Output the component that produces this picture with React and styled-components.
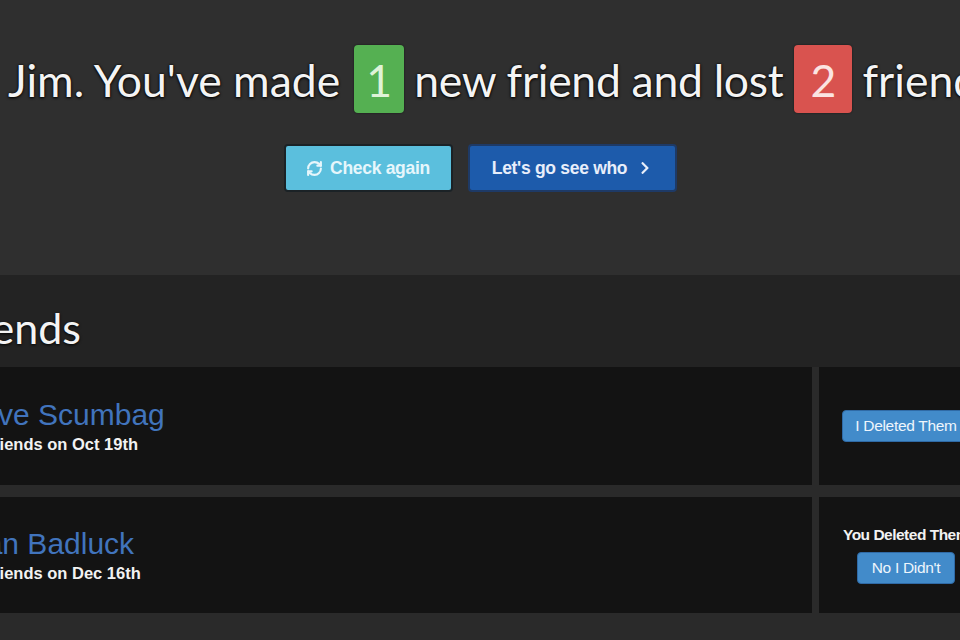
import React from "react";
import styled, { createGlobalStyle } from "styled-components";
import { RefreshCw } from "lucide-react";
import { FaChevronRight } from "react-icons/fa";

// globals

const Global = createGlobalStyle`
  html, body {
    margin: 0;
    padding: 0;
    background: #272727;
    overflow: hidden;
  }
  body {
    width: 960px;
    height: 640px;
  }
`;

// styles

const Page = styled.div`
  width: 960px;
  height: 640px;
  overflow: hidden;
  display: flex;
  flex-direction: column;
`;

const Hero = styled.div`
  height: 275px;
  flex-shrink: 0;
  background: #2f2f2f;
  display: flex;
  flex-direction: column;
  padding-top: 45px;
  box-sizing: border-box;
`;

const Headline = styled.div`
  display: flex;
  align-items: center;
  white-space: nowrap;
  padding-left: 8px;
  font-family: "Lato", "DejaVu Sans", sans-serif;
  font-size: 44.5px;
  color: #f4f4f4;
  text-shadow: 0 1px 3px #000, 0 0 2px #000;
`;

const Part = styled.span`
  letter-spacing: ${(p) => p.ls || 0}px;
`;

const Badge = styled.span`
  display: inline-flex;
  align-items: center;
  justify-content: center;
  height: 68px;
  min-width: ${(p) => p.w}px;
  margin: 0 10px 0 ${(p) => p.ml}px;
  border-radius: 4px;
  background: ${(p) => (p.kind === "good" ? "#55b052" : "#d9534f")};
  color: ${(p) => (p.kind === "good" ? "#dff3d8" : "#fbe4e2")};
  text-shadow: none;
  box-shadow: 0 0 2px rgba(0, 0, 0, 0.6);
`;

const Actions = styled.div`
  display: flex;
  justify-content: center;
  gap: 15px;
  margin-top: 31px;
`;

const Btn = styled.button`
  display: inline-flex;
  align-items: center;
  justify-content: center;
  gap: 7px;
  height: 48px;
  width: ${(p) => p.w}px;
  border-radius: 4px;
  font-family: "Liberation Sans", Arial, sans-serif;
  font-weight: 700;
  font-size: 17.5px;
  letter-spacing: -0.3px;
  color: ${(p) => (p.variant === "info" ? "#e6f6fb" : "#e8eefa")};
  background: ${(p) => (p.variant === "info" ? "#5bbfdd" : "#1d5bab")};
  border: 2px solid ${(p) => (p.variant === "info" ? "#1b2226" : "#1e3a66")};
  padding: 0;
`;

const Panel = styled.div`
  margin-left: -60px;
  width: 1053px;
  display: flex;
  flex-direction: column;
  flex: 1;
`;

const PanelHead = styled.div`
  height: 92px;
  box-sizing: border-box;
  padding-top: 12px;
  background: #232323;
  display: flex;
  align-items: center;
  padding-left: 3px;
  font-family: "Lato", "DejaVu Sans", sans-serif;
  font-size: 43px;
  color: #f4f4f4;
  text-shadow: 0 1px 3px #000;
`;

const Table = styled.div`
  display: grid;
  grid-template-columns: 1fr 174px;
  column-gap: 7px;
  row-gap: 12px;
  background: #2a2a2a;
  padding-bottom: 30px;
`;

const NameCell = styled.div`
  background: #131313;
  height: ${(p) => p.h}px;
  display: flex;
  flex-direction: column;
  justify-content: center;
  padding-left: 15px;
  box-sizing: border-box;
`;

const Name = styled.div`
  margin-left: ${(p) => p.shift || 0}px;
  font-family: "Liberation Sans", Arial, sans-serif;
  font-size: 30px;
  color: #4174bd;
  line-height: 32px;
`;

const Since = styled.div`
  margin-left: ${(p) => p.shift || 0}px;
  font-family: "Liberation Sans", Arial, sans-serif;
  font-weight: 700;
  font-size: 16.5px;
  color: #f2f2f2;
  margin-top: 4px;
`;

const ActionCell = styled.div`
  background: #131313;
  display: flex;
  flex-direction: column;
  align-items: center;
  justify-content: center;
  gap: 8px;
`;

const Note = styled.div`
  font-family: "Liberation Sans", Arial, sans-serif;
  font-weight: 700;
  font-size: 15.5px;
  color: #f2f2f2;
  letter-spacing: -0.5px;
  white-space: nowrap;
`;

const SmallBtn = styled.button`
  height: 32px;
  padding: 0 ${(p) => p.pad}px;
  border-radius: 4px;
  border: 1px solid #2f6aa6;
  background: #428bca;
  color: #eef5fc;
  font-family: "Liberation Sans", Arial, sans-serif;
  font-size: 15.5px;
  letter-spacing: -0.3px;
  white-space: nowrap;
`;

const friends = [
  {
    name: "Steve Scumbag",
    since: "Were friends on Oct 19th",
    shift: -2,
    sinceShift: -12,
    h: 118,
    note: null,
    button: "I Deleted Them",
    pad: 12,
  },
  {
    name: "Brian Badluck",
    since: "Were friends on Dec 16th",
    shift: -6,
    sinceShift: -12,
    h: 116,
    note: "You Deleted Them",
    button: "No I Didn't",
    pad: 14,
  },
];

function App() {
  return (
    <Page>
      <Global />
      <Hero>
        <Headline>
          <Part>Jim. You've made</Part>
          <Badge kind="good" w={50} ml={14}>1</Badge>
          <Part ls={-0.3}>new friend and lost</Part>
          <Badge kind="bad" w={58} ml={11}>2</Badge>
          <Part>friends.</Part>
        </Headline>
        <Actions>
          <Btn variant="info" w={169}>
            <RefreshCw size={17} strokeWidth={3} />
            Check again
          </Btn>
          <Btn variant="primary" w={209}>
            Let's go see who
            <FaChevronRight size={14} style={{ marginLeft: 4 }} />
          </Btn>
        </Actions>
      </Hero>
      <Panel>
        <PanelHead>Friends</PanelHead>
        <Table>
          {friends.map((f) => (
            <React.Fragment key={f.name}>
              <NameCell h={f.h}>
                <Name shift={f.shift}>{f.name}</Name>
                <Since shift={f.sinceShift}>{f.since}</Since>
              </NameCell>
              <ActionCell>
                {f.note && <Note>{f.note}</Note>}
                <SmallBtn pad={f.pad}>{f.button}</SmallBtn>
              </ActionCell>
            </React.Fragment>
          ))}
        </Table>
      </Panel>
    </Page>
  );
}

export default App;
